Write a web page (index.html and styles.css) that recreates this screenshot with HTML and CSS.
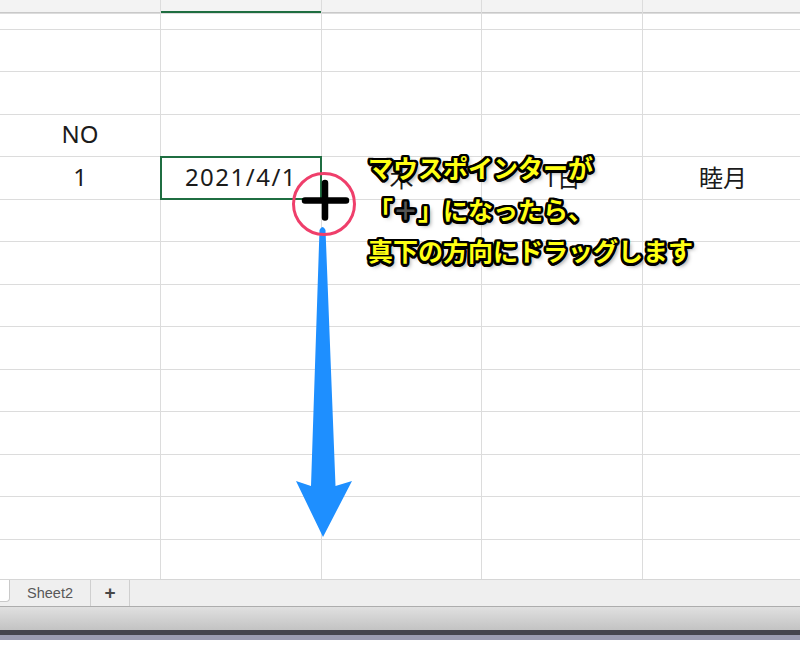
FILE: index.html
```html
<!DOCTYPE html>
<html lang="ja">
<head>
<meta charset="utf-8">
<title>Sheet</title>
<link rel="stylesheet" href="styles.css">
</head>
<body>
<div class="app">
  <div class="sheet">
    <div class="c hd"></div><div class="c hd hd-sel"></div><div class="c hd"></div><div class="c hd"></div><div class="c hd"></div>
    <div class="c"></div><div class="c"></div><div class="c"></div><div class="c"></div><div class="c"></div>
    <div class="c"></div><div class="c"></div><div class="c"></div><div class="c"></div><div class="c"></div>
    <div class="c"></div><div class="c"></div><div class="c"></div><div class="c"></div><div class="c"></div>
    <div class="c">NO</div><div class="c"></div><div class="c"></div><div class="c"></div><div class="c"></div>
    <div class="c">1</div><div class="c sel date">2021/4/1</div><div class="c">木</div><div class="c">1日</div><div class="c">睦月</div>
    <div class="c"></div><div class="c"></div><div class="c"></div><div class="c"></div><div class="c"></div>
    <div class="c"></div><div class="c"></div><div class="c"></div><div class="c"></div><div class="c"></div>
    <div class="c"></div><div class="c"></div><div class="c"></div><div class="c"></div><div class="c"></div>
    <div class="c"></div><div class="c"></div><div class="c"></div><div class="c"></div><div class="c"></div>
    <div class="c"></div><div class="c"></div><div class="c"></div><div class="c"></div><div class="c"></div>
    <div class="c"></div><div class="c"></div><div class="c"></div><div class="c"></div><div class="c"></div>
    <div class="c"></div><div class="c"></div><div class="c"></div><div class="c"></div><div class="c"></div>
    <div class="c"></div><div class="c"></div><div class="c"></div><div class="c"></div><div class="c"></div>
    <div class="c"></div><div class="c"></div><div class="c"></div><div class="c"></div><div class="c"></div>
  </div>
  <div class="tabs">
    <div class="tab-active"></div>
    <div class="tab">Sheet2</div>
    <div class="tab tab-add">+</div>
  </div>
  <div class="status"></div>
  <div class="dock-dark"></div>
  <div class="dock-light"></div>

  <svg class="marks" width="800" height="661" viewBox="0 0 800 661" aria-hidden="true">
    <path d="M319.5 230 Q322.5 224 325.5 230 L335.5 486 L352 481 L323 537 L296 481 L311 486 Z" fill="#1e8fff"/>
    <circle cx="324" cy="204" r="30.5" fill="none" stroke="#ef3f6b" stroke-width="3"/>
    <path d="M305 200.5 H346 M325 183 V217.5" stroke="#000" stroke-width="6.5" stroke-linecap="round" fill="none"/>
  </svg>

  <div class="note">
    <div>マウスポインターが</div>
    <div>「<span class="note-plus">＋</span>」になったら、</div>
    <div>真下の方向にドラッグします</div>
  </div>
</div>
</body>
</html>
```
FILE: styles.css
```css
html, body {
  margin: 0;
  padding: 0;
  background: #ffffff;
}

.app {
  position: relative;
  width: 800px;
  height: 661px;
  overflow: hidden;
}

.sheet {
  display: grid;
  grid-template-columns: 160px 160px 159px 160px 160px;
  grid-template-rows: 13px 15px 41px 42px 41px 42px 41px 42px 41px 42px 41px 42px 41px 42px 39px;
  gap: 1px;
  height: 579px;
  overflow: hidden;
  background: #dcdcdc;
}

.c {
  background: #ffffff;
  display: flex;
  align-items: center;
  justify-content: center;
  padding-bottom: 4px;
  box-sizing: border-box;
  font-family: "Noto Sans", "Noto Sans CJK JP", sans-serif;
  font-size: 24px;
  color: #1b1b1b;
  white-space: nowrap;
}

.hd {
  padding-bottom: 0;
  background: #f3f3f3;
  box-shadow: inset 0 -1px #c9c9c9;
}

.hd-sel {
  box-shadow: inset 0 -2px #1f6e41;
}

.sel {
  outline: 2px solid #1f6e41;
  outline-offset: -1px;
  position: relative;
}

.date {
  letter-spacing: 1.5px;
}

.tabs {
  display: flex;
  height: 26px;
  background: #efefef;
  border-top: 1px solid #d6d6d6;
  border-bottom: 1px solid #adadad;
  font-family: "Liberation Sans", Arial, sans-serif;
}

.tab-active {
  width: 9px;
  height: 21px;
  background: #ffffff;
  border-right: 1px solid #c9c9c9;
  border-bottom: 1px solid #c9c9c9;
  border-bottom-right-radius: 4px;
}

.tab {
  width: 80px;
  display: flex;
  align-items: center;
  justify-content: center;
  border-right: 1px solid #cfcfcf;
  font-size: 14.5px;
  color: #585858;
}

.tab-add {
  width: 38px;
  font-size: 19px;
  font-weight: 700;
  color: #474747;
}

.status {
  height: 23px;
  background: linear-gradient(#e0e0e0, #c3c3c3);
}

.dock-dark {
  height: 5px;
  background: #44454e;
}

.dock-light {
  height: 5px;
  background: #9a9cb1;
}

.marks {
  position: absolute;
  left: 0;
  top: 0;
  pointer-events: none;
}

.note {
  position: absolute;
  left: 368px;
  top: 147px;
  font-family: "Noto Sans CJK JP", sans-serif;
  font-weight: 700;
  font-size: 25px;
  line-height: 41.5px;
  color: #ffff14;
  white-space: nowrap;
  text-shadow:
    2.5px 0 #000, -2.5px 0 #000, 0 2.5px #000, 0 -2.5px #000,
    2px 2px #000, -2px -2px #000, 2px -2px #000, -2px 2px #000,
    1px 2.5px #000, -1px 2.5px #000, 1px -2.5px #000, -1px -2.5px #000,
    2.5px 1px #000, -2.5px 1px #000, 2.5px -1px #000, -2.5px -1px #000,
    3px 3px 4px rgba(0, 0, 0, 0.5);
}

.note-plus {
  color: #555555;
}
```
